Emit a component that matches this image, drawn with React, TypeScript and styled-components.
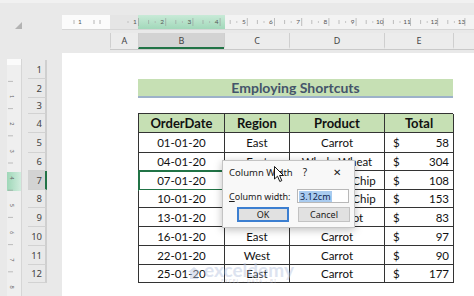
import React from 'react'
import styled, { createGlobalStyle } from 'styled-components'

const GlobalStyle = createGlobalStyle`
  html, body {
    margin: 0;
    padding: 0;
  }
  body {
    background: #e9e9e9;
  }
`

const SHEET_FONT = `Lato, 'Liberation Sans', sans-serif`
const UI_FONT = `'Noto Sans', 'Open Sans', sans-serif`
const EXCEL_GREEN = '#217346'
const CM = 27.2

// every sheet row, row 1 to row 12
const ROW_HEIGHTS = [19, 19, 16, 19, 20, 18, 19, 18, 19, 19, 19, 18]
const SELECTED_ROW = 7

const COLUMNS = [
  { label: 'A', width: 28 },
  { label: 'B', width: 86 },
  { label: 'C', width: 65 },
  { label: 'D', width: 95 },
  { label: 'E', width: 69 },
  { label: '', width: 40 },
]

const ORDERS = [
  { date: '01-01-20', region: 'East', product: 'Carrot', total: 58 },
  { date: '04-01-20', region: 'East', product: 'Whole Wheat', total: 304 },
  { date: '07-01-20', region: 'West', product: 'Chocolate Chip', total: 108 },
  { date: '10-01-20', region: 'East', product: 'Chocolate Chip', total: 153 },
  { date: '13-01-20', region: 'West', product: 'Arrowroot', total: 83 },
  { date: '16-01-20', region: 'East', product: 'Carrot', total: 97 },
  { date: '22-01-20', region: 'West', product: 'Carrot', total: 90 },
  { date: '25-01-20', region: 'East', product: 'Carrot', total: 177 },
]

const Window = styled.div`
  position: relative;
  width: 474px;
  height: 296px;
  overflow: hidden;
  background: #e9e9e9;
`

const TopStrip = styled.div`
  height: 15px;
  border-top: 3px solid #f1f1f1;
  box-sizing: border-box;
`

const RulerRow = styled.div`
  display: flex;
  height: 15px;
`

const Corner = styled.div`
  width: 62px;
  display: flex;
  align-items: flex-end;
  padding: 0 0 1px 15px;
  box-sizing: border-box;
`

const SelectAll = styled.div`
  width: 0;
  height: 0;
  border-left: 7px solid transparent;
  border-bottom: 7px solid #b3b3b3;
`

const HeaderRow = styled.div`
  display: flex;
  height: 16px;
  margin: 3px 0 0 110px;
  border-bottom: 1px solid #c9c9c9;
`

const ColumnHeader = styled.div<{ $width: number; $active?: boolean }>`
  flex: 0 0 ${(p) => p.$width}px;
  display: flex;
  align-items: center;
  justify-content: center;
  box-sizing: border-box;
  border-left: 1px solid #cfcfcf;
  border-bottom: 2px solid ${(p) => (p.$active ? EXCEL_GREEN : 'transparent')};
  background: ${(p) => (p.$active ? '#d3d3d3' : '#ececec')};
  font: 9px ${UI_FONT};
  color: #444;
`

const Body = styled.div`
  display: flex;
  margin-top: 3px;
  height: 260px;
`

const Side = styled.div`
  width: 62px;
  display: flex;
  padding: 6px 0 0 7px;
  box-sizing: border-box;
  gap: 6px;
`

const RowHeaders = styled.div`
  width: 19px;
  display: flex;
  flex-direction: column;
  padding-top: 1px;
`

const RowHeader = styled.div<{ $height: number; $active?: boolean }>`
  height: ${(p) => p.$height}px;
  flex: 0 0 auto;
  display: flex;
  align-items: center;
  justify-content: flex-end;
  padding-right: 3px;
  box-sizing: border-box;
  border-bottom: 1px solid #d2d2d2;
  border-right: 2px solid ${(p) => (p.$active ? EXCEL_GREEN : '#cfcfcf')};
  background: ${(p) => (p.$active ? '#d3d3d3' : 'transparent')};
  font: 9.5px ${UI_FONT};
  color: #444;
`

const Sheet = styled.div`
  flex: 1;
  background: #fff;
  display: grid;
  grid-template-columns: 76px 315px;
  grid-template-rows: ${ROW_HEIGHTS.map((h) => `${h}px`).join(' ')};
  padding-top: 7px;
  align-content: start;
`

const Title = styled.div`
  grid-row: 2;
  grid-column: 2;
  display: flex;
  align-items: center;
  justify-content: center;
  background: #c6e0b4;
  border-bottom: 2px solid #9db2c9;
  font: bold 14px ${SHEET_FONT};
  color: #44546a;
`

const Table = styled.div`
  grid-row: 4 / 13;
  grid-column: 2;
  display: grid;
  grid-template-columns: 86px 65px 95px 69px;
  grid-template-rows: ${ROW_HEIGHTS.slice(3).map((h) => `${h}px`).join(' ')};
  border-left: 1px solid #333;
  border-top: 1px solid #333;
  margin: -1px 0 0 0;
`

const Cell = styled.div<{ $head?: boolean; $selected?: boolean }>`
  display: flex;
  align-items: center;
  justify-content: center;
  box-sizing: border-box;
  border-right: 1px solid #333;
  border-bottom: 1px solid #333;
  background: ${(p) => (p.$head ? '#c6e0b4' : '#fff')};
  font: ${(p) => (p.$head ? 'bold 13px' : '11.5px')} ${SHEET_FONT};
  color: #111;
  white-space: nowrap;
  outline: ${(p) => (p.$selected ? `2px solid ${EXCEL_GREEN}` : 'none')};
  outline-offset: -1px;
`

const MoneyCell = styled(Cell)`
  justify-content: space-between;
  padding: 0 4px 0 8px;
`

const Dialog = styled.div`
  position: absolute;
  left: 222px;
  top: 160px;
  width: 133px;
  height: 68px;
  box-sizing: border-box;
  background: #f8f8f8;
  border: 1px solid #c4c4c4;
  box-shadow: 0 2px 8px rgba(0, 0, 0, 0.25);
  font: 9px ${UI_FONT};
  color: #1a1a1a;
  display: flex;
  flex-direction: column;
  padding: 0 0 0 6px;
  white-space: nowrap;
`

const DialogTitle = styled.div`
  display: flex;
  align-items: center;
  height: 22px;
  font-size: 9.5px;
`

const TitleText = styled.span`
  flex: 1;
`

const TitleButton = styled.span<{ $width: number; $gap: number }>`
  width: ${(p) => p.$width}px;
  margin-right: ${(p) => p.$gap}px;
  text-align: center;
  font-size: 10px;
`

const FieldRow = styled.div`
  display: flex;
  align-items: center;
  height: 16px;
  margin-top: 5px;
`

const FieldLabel = styled.span`
  width: 68px;
`

const Input = styled.div`
  width: 52px;
  height: 14px;
  box-sizing: border-box;
  border: 1px solid #b8b8b8;
  background: #fff;
  display: flex;
  align-items: center;
  padding-left: 1px;
`

const Selection = styled.span`
  background: #a9cbef;
  color: #10284f;
  padding: 0 1px;
  line-height: 11px;
`

const ButtonRow = styled.div`
  display: flex;
  gap: 9px;
  margin: 3px 0 0 8px;
`

const Button = styled.div<{ $default?: boolean }>`
  width: 52px;
  height: 15px;
  box-sizing: border-box;
  display: flex;
  align-items: center;
  justify-content: center;
  background: #e1e1e1;
  border: ${(p) => (p.$default ? '2px solid #3c7fd1' : '1px solid #c2c2c2')};
`

const Cursor = styled.svg`
  position: absolute;
  left: 274px;
  top: 166px;
`

const Watermark = styled.div`
  position: absolute;
  left: 187px;
  top: 261px;
  display: flex;
  align-items: center;
  gap: 3px;
  opacity: 0.45;
  pointer-events: none;
`

const WatermarkText = styled.div`
  display: flex;
  flex-direction: column;
  align-items: center;
  font: bold 19px ${SHEET_FONT};
  color: #b6c3de;
  line-height: 17px;
`

const WatermarkTag = styled.span`
  font: 5px ${UI_FONT};
  letter-spacing: 1px;
  color: #aab;
  line-height: 6px;
`

const HorizontalRuler = () => {
  const numbers = Array.from({ length: 13 }, (_, i) => 73 + CM * i)
  return (
    <svg width={412} height={15}>
      <rect x={0} y={0} width={48} height={15} fill="#fbfbfb" />
      <rect x={48} y={0} width={28} height={15} fill="#e5e5e5" />
      <defs>
        <linearGradient id="hsel" x1="0" y1="0" x2="0" y2="1">
          <stop offset="0" stopColor="#c8ead7" />
          <stop offset="1" stopColor="#9fd7b8" />
        </linearGradient>
      </defs>
      <rect x={76} y={0} width={87} height={15} fill="url(#hsel)" />
      <rect x={163} y={0} width={249} height={15} fill="#f3f3f3" />
      <line x1={0} y1={14.5} x2={412} y2={14.5} stroke="#d6d6d6" />
      {[12, 32, 38].map((x) => (
        <line key={x} x1={x} y1={5} x2={x} y2={9} stroke="#888" strokeWidth={0.6} />
      ))}
      <text x={18} y={9} fontSize={6.5} fill="#555" textAnchor="middle" fontFamily="Lato, sans-serif">
        1
      </text>
      {numbers.map((x, i) => (
        <g key={i}>
          <text x={x} y={9} fontSize={6.5} fill="#555" textAnchor="middle" fontFamily="Lato, sans-serif">
            {i + 1}
          </text>
          <line x1={x + 3.5} y1={3} x2={x + 3.5} y2={11} stroke="#999" strokeWidth={0.6} />
          <line x1={x + 13.6} y1={5} x2={x + 13.6} y2={9} stroke="#999" strokeWidth={0.6} />
          <line x1={x - 7} y1={6} x2={x - 7} y2={8} stroke="#aaa" strokeWidth={0.6} />
        </g>
      ))}
    </svg>
  )
}

const VerticalRuler = () => {
  const numbers = Array.from({ length: 8 }, (_, i) => 36 + CM * i)
  return (
    <svg width={15} height={254}>
      <rect x={0} y={0} width={15} height={254} fill="#efefef" />
      <rect x={0} y={0} width={15} height={6} fill="#fbfbfb" />
      <defs>
        <linearGradient id="vsel" x1="0" y1="0" x2="1" y2="0">
          <stop offset="0" stopColor="#9fd7b8" />
          <stop offset="1" stopColor="#d4eee0" />
        </linearGradient>
      </defs>
      <rect x={0} y={113} width={15} height={19} fill="url(#vsel)" />
      {numbers.map((y, i) => (
        <g key={i}>
          <line x1={1} y1={y - 13.6} x2={6} y2={y - 13.6} stroke="#999" strokeWidth={0.6} />
          <text
            x={3}
            y={y}
            fontSize={5.5}
            fill="#666"
            fontFamily="Lato, sans-serif"
            transform={`rotate(90 3 ${y})`}
          >
            {i + 1}
          </text>
        </g>
      ))}
      <line x1={14.5} y1={0} x2={14.5} y2={254} stroke="#d6d6d6" />
    </svg>
  )
}

const App = () => (
  <Window>
    <GlobalStyle />
    <TopStrip />
    <RulerRow>
      <Corner>
        <SelectAll />
      </Corner>
      <HorizontalRuler />
    </RulerRow>
    <HeaderRow>
      {COLUMNS.map((col, i) => (
        <ColumnHeader key={i} $width={col.width} $active={col.label === 'B'}>
          {col.label}
        </ColumnHeader>
      ))}
    </HeaderRow>
    <Body>
      <Side>
        <VerticalRuler />
        <RowHeaders>
          {ROW_HEIGHTS.map((h, i) => (
            <RowHeader key={i} $height={h} $active={i + 1 === SELECTED_ROW}>
              {i + 1}
            </RowHeader>
          ))}
        </RowHeaders>
      </Side>
      <Sheet>
        <Title>Employing Shortcuts</Title>
        <Table>
          {['OrderDate', 'Region', 'Product', 'Total'].map((h) => (
            <Cell key={h} $head>
              {h}
            </Cell>
          ))}
          {ORDERS.map((o, i) => (
            <React.Fragment key={o.date}>
              <Cell $selected={i + 5 === SELECTED_ROW}>{o.date}</Cell>
              <Cell>{o.region}</Cell>
              <Cell>{o.product}</Cell>
              <MoneyCell>
                <span>$</span>
                <span>{o.total}</span>
              </MoneyCell>
            </React.Fragment>
          ))}
        </Table>
      </Sheet>
    </Body>

    <Watermark>
      <svg width={14} height={14} viewBox="0 0 14 14">
        <path d="M7 1 L13 6 L11 6 L11 13 L3 13 L3 6 L1 6 Z" fill="#b6c3de" />
      </svg>
      <WatermarkText>
        exceldemy
        <WatermarkTag>EXCEL · DATA · BI</WatermarkTag>
      </WatermarkText>
    </Watermark>

    <Dialog>
      <DialogTitle>
        <TitleText>Column Width</TitleText>
        <TitleButton $width={14} $gap={14}>
          ?
        </TitleButton>
        <TitleButton $width={22} $gap={6}>
          ✕
        </TitleButton>
      </DialogTitle>
      <FieldRow>
        <FieldLabel>
          <u>C</u>olumn width:
        </FieldLabel>
        <Input>
          <Selection>3.12cm</Selection>
        </Input>
      </FieldRow>
      <ButtonRow>
        <Button $default>OK</Button>
        <Button>Cancel</Button>
      </ButtonRow>
    </Dialog>

    <Cursor width={11} height={17} viewBox="0 0 11 17">
      <path d="M0.5 0.5 L0.5 13 L3.5 10.2 L5.8 15.5 L7.8 14.6 L5.6 9.5 L9.5 9.5 Z" fill="#fff" stroke="#000" strokeWidth={0.9} />
    </Cursor>
  </Window>
)

export default App
